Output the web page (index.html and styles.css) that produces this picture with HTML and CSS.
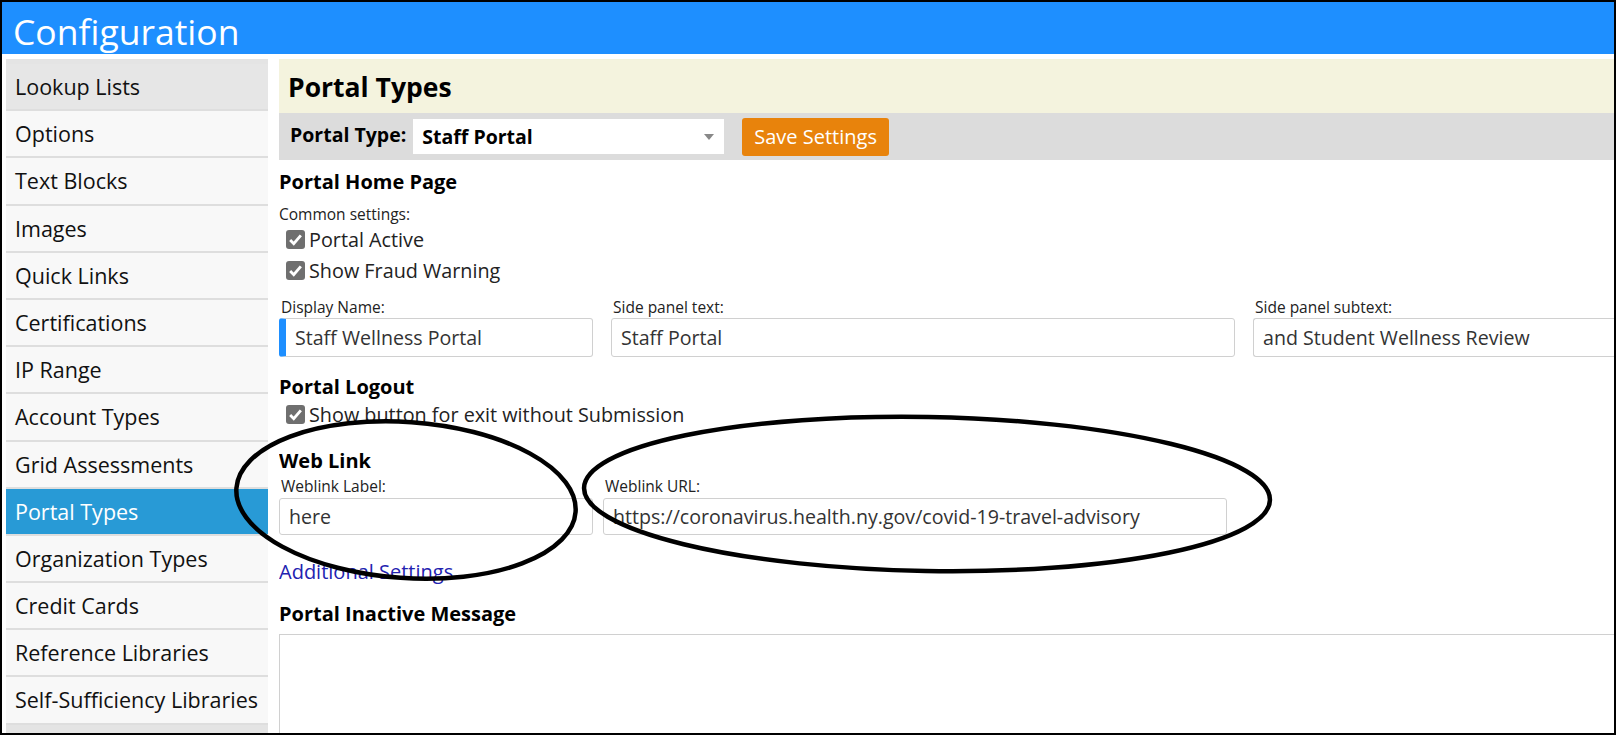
FILE: index.html
```html
<!DOCTYPE html>
<html lang="en">
<head>
    <meta charset="UTF-8">
    <meta name="viewport" content="width=device-width, initial-scale=1.0">
    <title>Configuration</title>
    <link rel="stylesheet" href="styles.css">
</head>
<body>
    <div class="frame">
        <header class="topbar">Configuration</header>

        <div class="layout">
            <nav class="sidebar">
                <div class="nav-item hovered">Lookup Lists</div>
                <div class="nav-item">Options</div>
                <div class="nav-item">Text Blocks</div>
                <div class="nav-item">Images</div>
                <div class="nav-item">Quick Links</div>
                <div class="nav-item">Certifications</div>
                <div class="nav-item">IP Range</div>
                <div class="nav-item">Account Types</div>
                <div class="nav-item">Grid Assessments</div>
                <div class="nav-item active">Portal Types</div>
                <div class="nav-item">Organization Types</div>
                <div class="nav-item">Credit Cards</div>
                <div class="nav-item">Reference Libraries</div>
                <div class="nav-item">Self-Sufficiency Libraries</div>
            </nav>

            <main class="content">
                <h1 class="page-title">Portal Types</h1>
                <div class="toolbar">
                    <span class="toolbar-label">Portal Type:</span>
                    <div class="select">
                        <span>Staff Portal</span>
                        <span class="caret"></span>
                    </div>
                    <button class="btn-save">Save Settings</button>
                </div>

                <h2 class="section">Portal Home Page</h2>
                <div class="hint">Common settings:</div>
                <div class="check-row"><span class="check"><svg viewBox="0 0 16 16"><path d="M3.5 8.5l3 3 6-7" /></svg></span>Portal Active</div>
                <div class="check-row"><span class="check"><svg viewBox="0 0 16 16"><path d="M3.5 8.5l3 3 6-7" /></svg></span>Show Fraud Warning</div>

                <div class="fields fields-home">
                    <div class="field">
                        <label>Display Name:</label>
                        <div class="input focused">Staff Wellness Portal</div>
                    </div>
                    <div class="field">
                        <label>Side panel text:</label>
                        <div class="input">Staff Portal</div>
                    </div>
                    <div class="field">
                        <label>Side panel subtext:</label>
                        <div class="input open-right">and Student Wellness Review</div>
                    </div>
                </div>

                <h2 class="section logout">Portal Logout</h2>
                <div class="check-row"><span class="check"><svg viewBox="0 0 16 16"><path d="M3.5 8.5l3 3 6-7" /></svg></span>Show button for exit without Submission</div>

                <h2 class="section weblink">Web Link</h2>
                <div class="fields fields-link">
                    <div class="field">
                        <label>Weblink Label:</label>
                        <div class="input short">here</div>
                    </div>
                    <div class="field">
                        <label>Weblink URL:</label>
                        <div class="input short">https://coronavirus.health.ny.gov/covid-19-travel-advisory</div>
                    </div>
                </div>

                <a class="more-link" href="#">Additional Settings</a>

                <h2 class="section inactive">Portal Inactive Message</h2>
                <div class="message-box"></div>
            </main>
        </div>

        <!-- hand-drawn marks around the web link fields -->
        <svg class="marks" viewBox="0 0 1612 731" width="1612" height="731">
            <ellipse cx="404" cy="498" rx="170" ry="78" transform="rotate(4 404 498)" />
            <ellipse cx="925" cy="492" rx="343" ry="77" transform="rotate(1 925 492)" />
        </svg>
    </div>
</body>
</html>
```

FILE: styles.css
```css
body {
    margin: 0;
    font-family: "Open Sans", "Noto Sans", sans-serif;
    color: #222;
    background: #fff;
}
.frame {
    position: relative;
    width: 1616px;
    height: 735px;
    box-sizing: border-box;
    border: 2px solid #000;
    overflow: hidden;
}
.topbar {
    height: 52px;
    background-color: #1e8fff;
    color: #fff;
    font-size: 35.5px;
    line-height: 58px;
    padding-left: 11px;
}
.layout {
    display: flex;
    padding-top: 5px;
    height: 674px;
}
.sidebar {
    width: 262px;
    margin-left: 4px;
    background-color: #e4e4e4;
    padding-top: 5px;
    flex-shrink: 0;
}
.nav-item {
    height: 45.2px;
    line-height: 46px;
    padding-left: 9px;
    font-size: 21.5px;
    color: #111;
    background-color: #f8f8f8;
    border-bottom: 2px solid #dedede;
    white-space: nowrap;
}
.nav-item.hovered { background-color: #e6e6e6; }
.nav-item.active {
    background-color: #289ad6;
    color: #fff;
}
.content {
    flex: 1;
    margin-left: 11px;
    min-width: 0;
    overflow: hidden;
}
.page-title {
    margin: 0;
    height: 54px;
    line-height: 56px;
    padding-left: 9px;
    background-color: #f4f3de;
    font-size: 26.5px;
    font-weight: bold;
    color: #000;
}
.toolbar {
    display: flex;
    align-items: center;
    height: 47px;
    background-color: #dcdcdc;
    padding-left: 11px;
}
.toolbar-label {
    font-size: 19.5px;
    font-weight: bold;
    color: #000;
    margin-right: 7px;
    margin-top: -5px;
}
.select {
    display: flex;
    align-items: center;
    justify-content: space-between;
    width: 292px;
    height: 35px;
    background: #fff;
    padding: 0 10px 0 9px;
    font-size: 19.5px;
    font-weight: bold;
    color: #000;
}
.caret {
    width: 0;
    height: 0;
    border-left: 5px solid transparent;
    border-right: 5px solid transparent;
    border-top: 6px solid #888;
}
.btn-save {
    margin-left: 18px;
    height: 38px;
    padding: 0 12px;
    border: none;
    border-radius: 3px;
    background-color: #e8830c;
    color: #fff;
    font-family: inherit;
    font-size: 20px;
}
.section {
    margin: 10px 0 0;
    font-size: 20px;
    line-height: 24px;
    font-weight: bold;
    color: #000;
}
.section.logout { margin-top: 18px; }
.section.weblink { margin-top: 19px; }
.section.inactive { margin-top: 18px; }
.hint {
    margin-top: 10px;
    font-size: 15.5px;
    line-height: 20px;
    color: #222;
}
.check-row {
    display: flex;
    align-items: center;
    height: 31px;
    padding-left: 7px;
    font-size: 19.8px;
    color: #222;
    white-space: nowrap;
}
.check {
    display: inline-flex;
    width: 19px;
    height: 19px;
    margin-right: 4px;
    border-radius: 3px;
    background-color: #6f6f6f;
}
.check svg {
    width: 19px;
    height: 19px;
    fill: none;
    stroke: #fff;
    stroke-width: 2.4;
}
.fields {
    display: grid;
    margin-top: 11px;
}
.fields-home {
    grid-template-columns: 314px 624px 420px;
    column-gap: 18px;
}
.fields-link {
    margin-top: 3px;
    grid-template-columns: 314px 624px;
    column-gap: 10px;
}
.field label {
    display: block;
    padding-left: 2px;
    font-size: 15.5px;
    line-height: 20px;
    color: #222;
}
.input {
    height: 37px;
    line-height: 38px;
    margin-top: 1px;
    padding-left: 9px;
    border: 1px solid #d0d0d0;
    border-radius: 3px;
    font-size: 19.6px;
    color: #333;
    white-space: nowrap;
    overflow: hidden;
}
.input.short {
    height: 35px;
    line-height: 36px;
    margin-top: 2px;
}
.input.focused {
    border-left: 7px solid #1e8fff;
    padding-left: 9px;
}
.input.open-right {
    border-right: none;
}
.more-link {
    display: block;
    margin-top: 25px;
    font-size: 20px;
    line-height: 24px;
    color: #2222b0;
    text-decoration: none;
}
.message-box {
    margin-top: 8px;
    height: 110px;
    border: 1px solid #d0d0d0;
    border-right: none;
}
.marks {
    position: absolute;
    left: 0;
    top: 0;
    pointer-events: none;
}
.marks ellipse {
    fill: none;
    stroke: #000;
    stroke-width: 4.5;
}
```
